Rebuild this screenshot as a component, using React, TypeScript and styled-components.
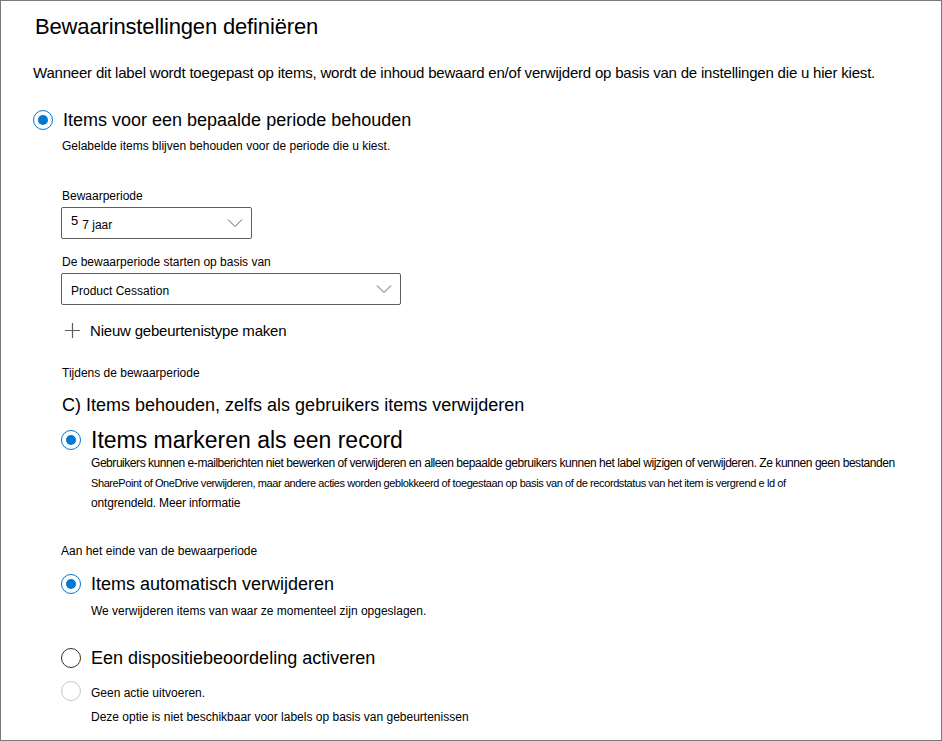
import styled, { createGlobalStyle } from "styled-components";

const GlobalStyle = createGlobalStyle`
  html, body {
    margin: 0;
    padding: 0;
    background: #ffffff;
  }
  body {
    font-family: "Liberation Sans", Arial, sans-serif;
    color: #000000;
  }
`;

function Chevron() {
  return (
    <svg width="16" height="10" viewBox="0 0 16 10">
      <polyline
        points="1,1.5 8,8.5 15,1.5"
        fill="none"
        stroke="#605e5c"
        strokeWidth="1"
      />
    </svg>
  );
}

function PlusIcon() {
  return (
    <svg width="15" height="15" viewBox="0 0 15 15">
      <path d="M7.5 0 V15 M0 7.5 H15" stroke="#605e5c" strokeWidth="1.2" />
    </svg>
  );
}

export default function App() {
  return (
    <Page>
      <GlobalStyle />
      <Title>Bewaarinstellingen definiëren</Title>
      <Intro>
        Wanneer dit label wordt toegepast op items, wordt de inhoud bewaard
        en/of verwijderd op basis van de instellingen die u hier kiest.
      </Intro>

      <RadioRow $gap={25} $indent={0}>
        <Radio $state="checked" />
        <OptionLabel $size={18}>
          Items voor een bepaalde periode behouden
        </OptionLabel>
      </RadioRow>

      <SubBlock>
        <Hint $gap={6}>
          Gelabelde items blijven behouden voor de periode die u kiest.
        </Hint>

        <FieldLabel $gap={34}>Bewaarperiode</FieldLabel>
        <Select $width={191}>
          <SelectValue>
            <Sup>5</Sup>7 jaar
          </SelectValue>
          <Chevron />
        </Select>

        <FieldLabel $gap={15}>De bewaarperiode starten op basis van</FieldLabel>
        <Select $width={340}>
          <SelectValue>Product Cessation</SelectValue>
          <Chevron />
        </Select>

        <AddLink>
          <PlusIcon />
          <span>Nieuw gebeurtenistype maken</span>
        </AddLink>

        <FieldLabel $gap={25}>Tijdens de bewaarperiode</FieldLabel>
        <Heading>C) Items behouden, zelfs als gebruikers items verwijderen</Heading>

        <RadioRow $gap={9} $indent={-1} $height={30}>
          <Radio $state="checked" />
          <OptionLabel $size={23}>Items markeren als een record</OptionLabel>
        </RadioRow>
        <Paragraph>
          <Line $size={12} $spacing={-0.45}>
            Gebruikers kunnen e-mailberichten niet bewerken of verwijderen en
            alleen bepaalde gebruikers kunnen het label wijzigen of verwijderen.
            Ze kunnen geen bestanden
          </Line>
          <Line $size={11} $spacing={-0.41}>
            SharePoint of OneDrive verwijderen, maar andere acties worden
            geblokkeerd of toegestaan op basis van of de recordstatus van het
            item is vergrend e ld of
          </Line>
          <Line $size={12} $spacing={-0.15}>
            ontgrendeld. Meer informatie
          </Line>
        </Paragraph>

        <FieldLabel $gap={30} $shift={-1}>
          Aan het einde van de bewaarperiode
        </FieldLabel>
        <RadioRow $gap={13} $indent={-1}>
          <Radio $state="checked" />
          <OptionLabel $size={18}>Items automatisch verwijderen</OptionLabel>
        </RadioRow>
        <Hint $gap={7} $indent={29}>
          We verwijderen items van waar ze momenteel zijn opgeslagen.
        </Hint>

        <RadioRow $gap={27} $indent={-1}>
          <Radio $state="empty" />
          <OptionLabel $size={18}>Een dispositiebeoordeling activeren</OptionLabel>
        </RadioRow>

        <RadioRow $gap={9} $indent={-1}>
          <Radio $state="disabled" />
          <OptionLabel $size={12} $drop={2}>
            Geen actie uitvoeren.
          </OptionLabel>
        </RadioRow>
        <Hint $gap={6} $indent={29}>
          Deze optie is niet beschikbaar voor labels op basis van gebeurtenissen
        </Hint>
      </SubBlock>
    </Page>
  );
}

const Page = styled.div`
  box-sizing: border-box;
  width: 942px;
  height: 741px;
  border: 1px solid #7a7a7a;
  padding: 11px 0 0 32px;
  overflow: hidden;
`;

const Title = styled.h1`
  margin: 0 0 0 2px;
  font-size: 22px;
  font-weight: normal;
  line-height: 30px;
  letter-spacing: -0.15px;
  color: #000000;
`;

const Intro = styled.p`
  margin: 21px 0 0 0;
  font-size: 15px;
  line-height: 20px;
  letter-spacing: -0.2px;
  white-space: nowrap;
`;

const RadioRow = styled.div<{ $gap: number; $indent: number; $height?: number }>`
  display: flex;
  align-items: center;
  gap: 10px;
  height: ${(p) => p.$height ?? 24}px;
  margin-top: ${(p) => p.$gap}px;
  margin-left: ${(p) => p.$indent}px;
`;

const Radio = styled.span<{ $state: "checked" | "empty" | "disabled" }>`
  position: relative;
  box-sizing: border-box;
  flex: none;
  width: 20px;
  height: 20px;
  border-radius: 50%;
  border: 1px solid
    ${(p) =>
      p.$state === "checked"
        ? "#0078d4"
        : p.$state === "disabled"
        ? "#c8c6c4"
        : "#323130"};
  background: #ffffff;

  &::after {
    content: "";
    display: ${(p) => (p.$state === "checked" ? "block" : "none")};
    position: absolute;
    left: 4px;
    top: 4px;
    width: 10px;
    height: 10px;
    border-radius: 50%;
    background: #0078d4;
  }
`;

const OptionLabel = styled.span<{ $size: number; $drop?: number }>`
  font-size: ${(p) => p.$size}px;
  white-space: nowrap;
  position: relative;
  top: ${(p) => p.$drop ?? 0}px;
`;

const SubBlock = styled.div`
  display: flex;
  flex-direction: column;
  align-items: flex-start;
  padding-left: 29px;
`;

const Hint = styled.div<{ $gap: number; $indent?: number }>`
  margin-top: ${(p) => p.$gap}px;
  margin-left: ${(p) => p.$indent ?? 0}px;
  font-size: 12px;
  line-height: 16px;
  white-space: nowrap;
`;

const FieldLabel = styled.div<{ $gap: number; $shift?: number }>`
  margin-top: ${(p) => p.$gap}px;
  margin-left: ${(p) => p.$shift ?? 0}px;
  font-size: 12px;
  line-height: 16px;
  white-space: nowrap;
`;

const Select = styled.div<{ $width: number }>`
  box-sizing: border-box;
  display: flex;
  align-items: center;
  justify-content: space-between;
  width: ${(p) => p.$width}px;
  height: 32px;
  margin: 3px 0 0 -1px;
  padding: 0 8px 0 9px;
  border: 1px solid #605e5c;
  border-radius: 2px;
`;

const SelectValue = styled.span`
  font-size: 12px;
  padding-top: 3px;
`;

const Sup = styled.span`
  position: relative;
  top: -4px;
  font-size: 13px;
  margin-right: 4px;
`;

const AddLink = styled.div`
  display: flex;
  align-items: center;
  gap: 10px;
  height: 20px;
  margin-top: 15px;
  padding-left: 3px;
  font-size: 15px;
  letter-spacing: -0.2px;
`;

const Heading = styled.div`
  margin-top: 13px;
  font-size: 18px;
  line-height: 22px;
  white-space: nowrap;
`;

const Paragraph = styled.div`
  display: flex;
  flex-direction: column;
  margin: -2px 0 0 29px;
`;

const Line = styled.span<{ $size: number; $spacing: number }>`
  font-size: ${(p) => p.$size}px;
  line-height: 20px;
  letter-spacing: ${(p) => p.$spacing}px;
  white-space: nowrap;
`;
